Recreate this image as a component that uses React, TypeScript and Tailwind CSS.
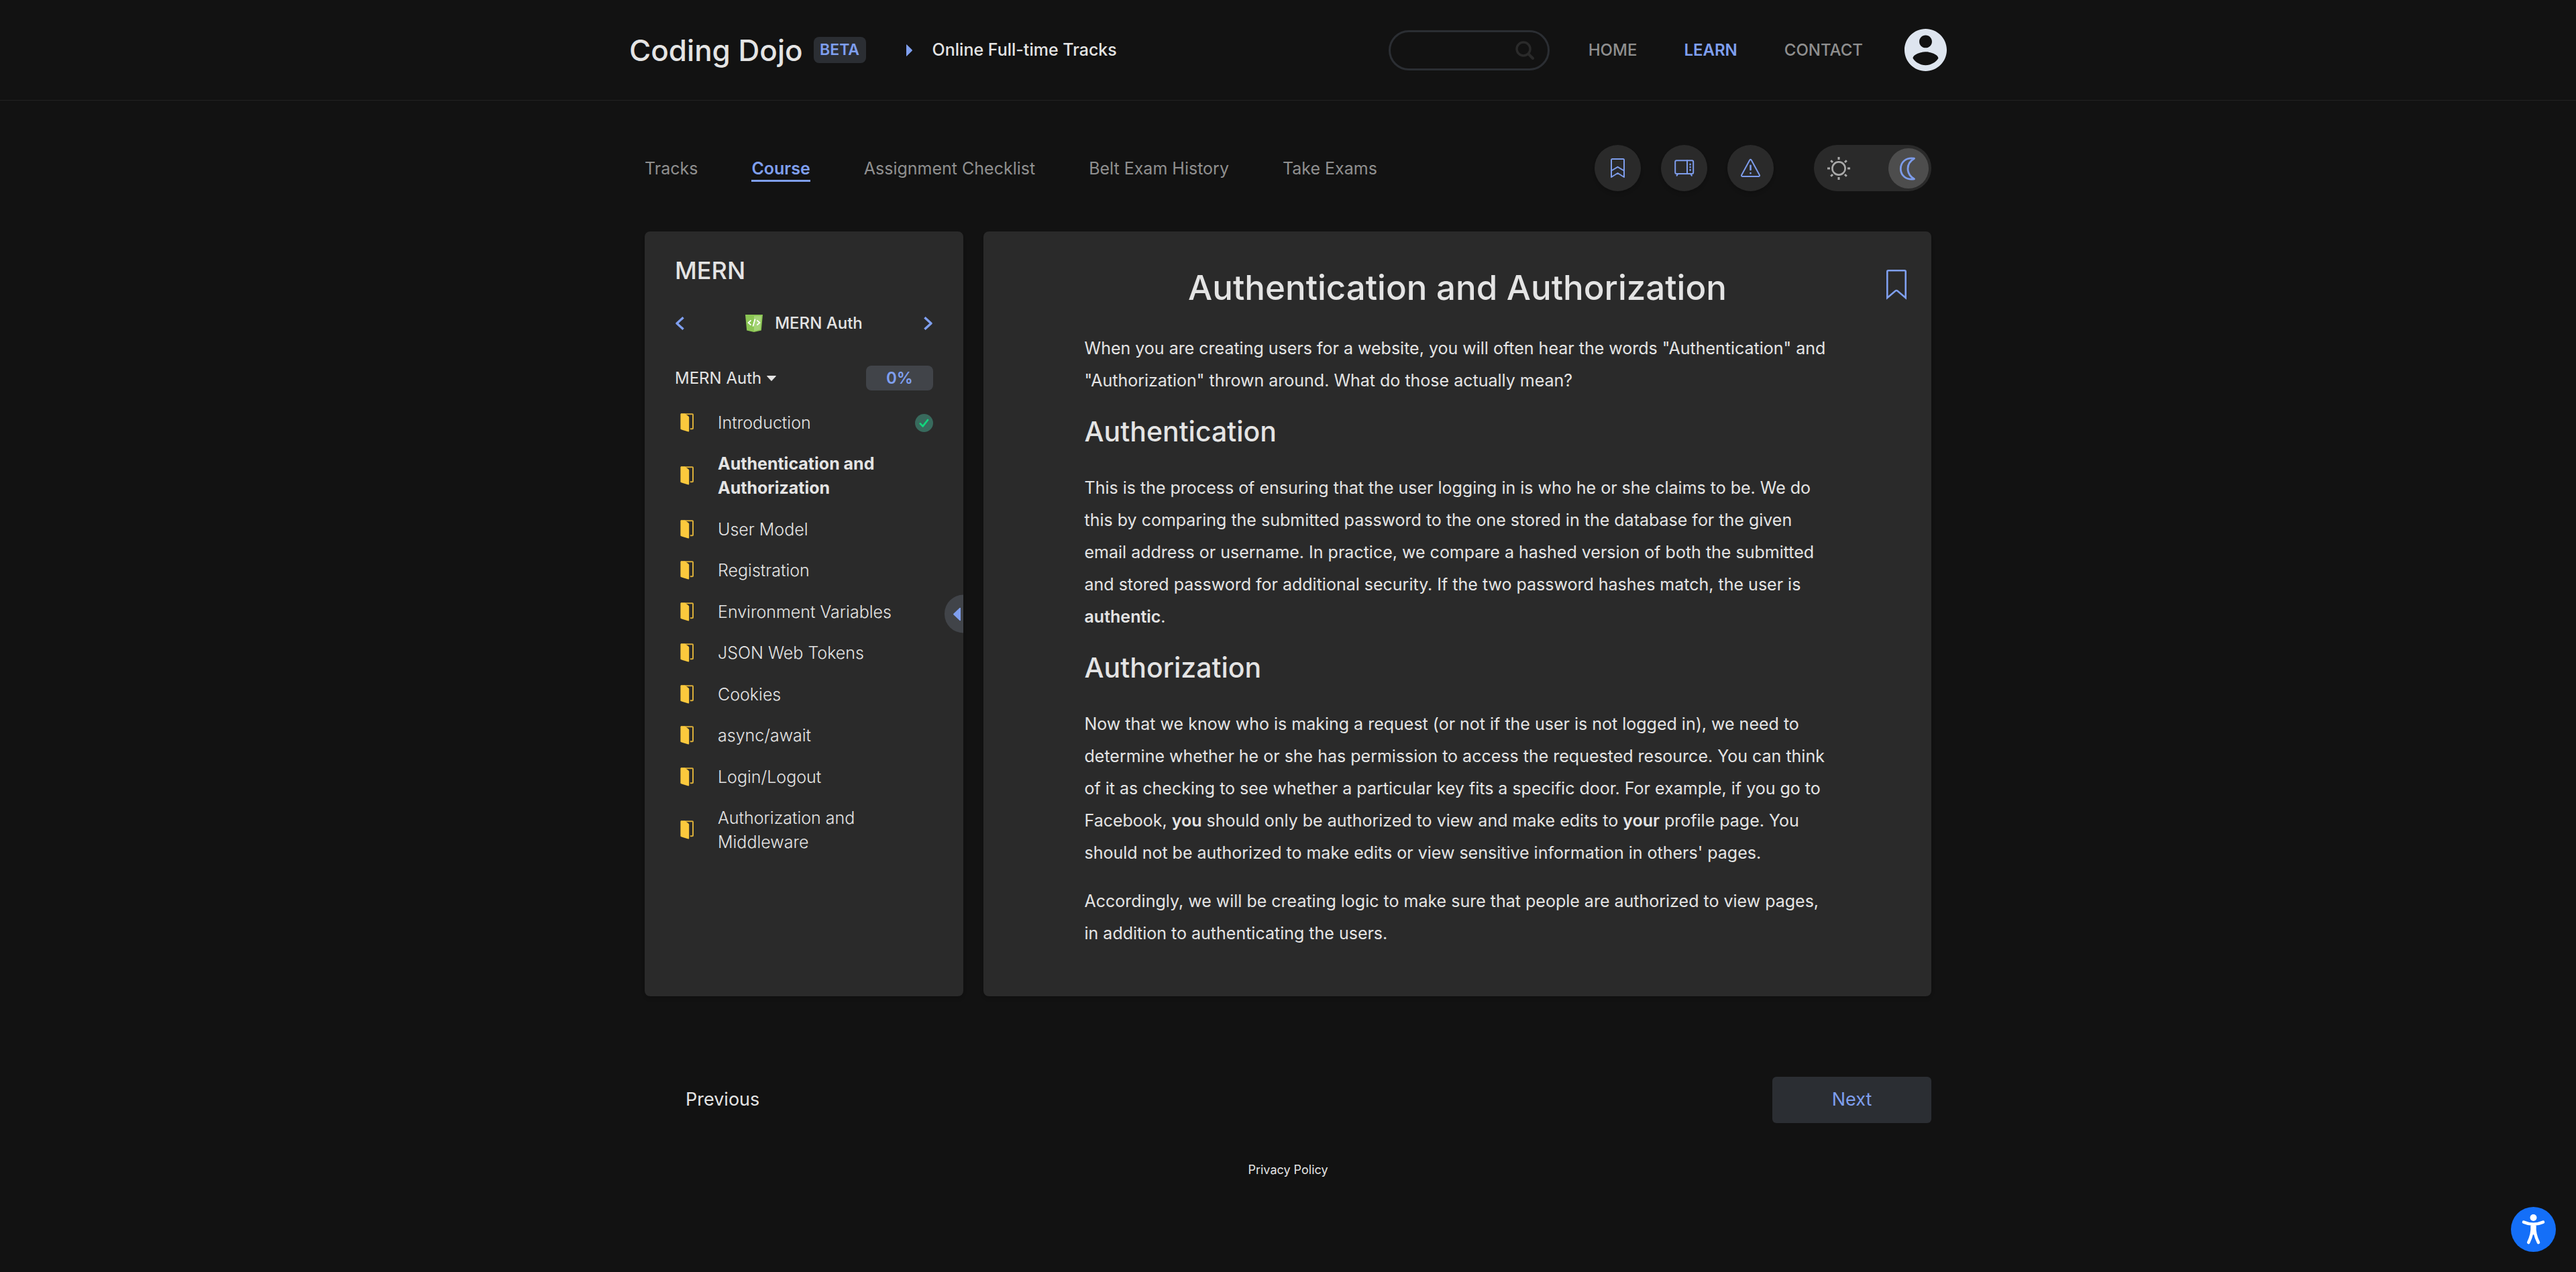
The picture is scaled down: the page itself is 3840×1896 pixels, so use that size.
import type { ReactNode } from "react";

const tabs = ["Tracks", "Course", "Assignment Checklist", "Belt Exam History", "Take Exams"];

const lessons = [
  { title: "Introduction", done: true },
  { title: "Authentication and Authorization", current: true },
  { title: "User Model" },
  { title: "Registration" },
  { title: "Environment Variables" },
  { title: "JSON Web Tokens" },
  { title: "Cookies" },
  { title: "async/await" },
  { title: "Login/Logout" },
  { title: "Authorization and Middleware" },
];

function LessonIcon() {
  return (
    <svg viewBox="0 0 20 28" className="ml-2 h-7 w-5 shrink-0" fill="none" aria-hidden="true">
      <path d="M1 1.2H18Q19 1.2 19 2.2V22.2Q19 23.2 18 23.2H14.8" stroke="#d9ad38" strokeWidth="2" />
      <path d="M0.4 1.6Q0.4 0.6 1.4 0.6H7L12.4 4.6Q13.2 5.3 13.2 6.3V26.4Q13.2 27.7 12 27.4L1.4 24.2Q0.4 23.8 0.4 22.9Z" fill="#fbc93d" />
    </svg>
  );
}

function DoneIcon() {
  return (
    <svg viewBox="0 0 27 27" className="size-[27px] shrink-0" fill="none" role="img" aria-label="Completed">
      <circle cx="13.5" cy="13.5" r="13.5" fill="#386a5d" />
      <path d="M7.8 14.4L11.6 18.4L19 9" stroke="#12d67d" strokeWidth="2.8" strokeLinecap="round" strokeLinejoin="round" />
    </svg>
  );
}

function ShieldIcon() {
  return (
    <svg viewBox="0 0 26 26" className="size-[26px]" fill="none" aria-hidden="true">
      <path d="M0 0H26L23.8 23.6L13 26L2.2 23.6Z" fill="#8bc554" />
      <path d="M13 2H24L22.2 22.2L13 24.2Z" fill="#a5d477" />
      <path d="M8.6 8.4L4.6 12L8.6 15.6M17.4 8.4L21.4 12L17.4 15.6M14.6 6.4L11.4 17.4" stroke="#ffffff" strokeWidth="1.8" />
    </svg>
  );
}

function RoundButton({ label, children }: { label: string; children: ReactNode }) {
  return (
    <button type="button" aria-label={label} className="size-[69px] rounded-full bg-[#2a2a2a] shadow-md">
      <svg
        viewBox="0 0 69 69"
        className="size-full"
        fill="none"
        stroke="#7d9ceb"
        strokeWidth="2"
        strokeLinecap="round"
        strokeLinejoin="round"
        aria-hidden="true"
      >
        {children}
      </svg>
    </button>
  );
}

function Header() {
  return (
    <header className="border-b border-[#222222]">
      <div className="mx-auto flex h-[149px] max-w-[1964px] items-center justify-between">
        <div className="flex items-center">
          <a href="#home" className="text-[44px] leading-none font-medium">Coding Dojo</a>
          <span className="ml-4 flex h-[39px] w-[78px] items-center justify-center rounded-lg bg-[#2b2e33] text-[23px] font-semibold text-[#7f9fef]">
            BETA
          </span>
          <svg viewBox="0 0 9 18" className="ml-[60px] h-[18px] w-[9px]" aria-hidden="true">
            <path d="M0 0.5Q0 -0.3 1 0.8L8.6 8.2Q9.2 9 8.6 9.8L1 17.2Q0 18.3 0 17.5Z" fill="#7f9fef" />
          </svg>
          <a href="#tracks" className="ml-[30px] text-[25px] font-medium">Online Full-time Tracks</a>
        </div>
        <div className="flex items-center">
          <label className="flex h-[60px] w-[240px] items-center rounded-full border-[3px] border-[#2b2e33] pr-5 pl-6">
            <input type="search" aria-label="Search" className="min-w-0 flex-1 bg-transparent text-2xl outline-none" />
            <svg viewBox="0 0 28 28" className="size-7 shrink-0" fill="none" stroke="#2a2a2a" aria-hidden="true">
              <circle cx="12" cy="12" r="10" strokeWidth="3.4" />
              <path d="M19.5 19.5L26 26" strokeWidth="4" strokeLinecap="round" />
            </svg>
          </label>
          <nav className="ml-[58px] flex gap-[70px] text-2xl font-medium text-[#8f8f8f]">
            <a href="#home">HOME</a>
            <a href="#learn" className="font-semibold text-[#7f9fef]">LEARN</a>
            <a href="#contact">CONTACT</a>
          </nav>
          <button type="button" aria-label="Account" className="ml-[62px]">
            <svg viewBox="2 2 20 20" className="size-[63px]" fill="#dee5ef" aria-hidden="true">
              <path d="M12 2C6.48 2 2 6.48 2 12s4.48 10 10 10 10-4.48 10-10S17.52 2 12 2zm0 3c1.66 0 3 1.34 3 3s-1.34 3-3 3-3-1.34-3-3 1.34-3 3-3zm0 14.2c-2.5 0-4.71-1.28-6-3.22.03-1.99 4-3.08 6-3.08 1.99 0 5.97 1.09 6 3.08-1.29 1.94-3.5 3.22-6 3.22z" />
            </svg>
          </button>
        </div>
      </div>
    </header>
  );
}

function Toolbar() {
  return (
    <div className="flex items-center justify-between">
      <nav className="flex gap-20 text-[25px] leading-[34px] text-[#8f8f8f]">
        {tabs.map((tab) => (
          <a
            key={tab}
            href="#course"
            className={
              tab === "Course"
                ? "border-y-[3px] border-t-transparent border-b-[#7f9fef] font-semibold text-[#7f9fef]"
                : "border-y-[3px] border-transparent"
            }
          >
            {tab}
          </a>
        ))}
      </nav>
      <div className="flex gap-[30px]">
        <RoundButton label="Bookmarks">
          <path d="M25 48V22.5Q25 21 26.5 21H42.5Q44 21 44 22.5V48L34.5 42Z" />
          <path d="M25 38.5L34.5 32.8L44 38.5" />
        </RoundButton>
        <RoundButton label="Videos">
          <rect x="21.2" y="23.3" width="27" height="19.6" rx="2" />
          <path d="M39 23.3V42.9M23.6 45.6L25 43.4M45.8 45.6L44.4 43.4" />
          <path d="M43.6 28.6V29.4M43.6 33V33.2M43.6 37V37.8" strokeWidth="2.4" />
        </RoundButton>
        <RoundButton label="Report an issue">
          <path d="M33.2 22.8Q34.5 20.8 35.8 22.8L47.8 44.8Q48.6 46.8 46.6 46.9H22.4Q20.4 46.8 21.2 44.8Z" />
          <path d="M34.5 30.8V37M34.5 42V42.2" strokeWidth="2.6" />
        </RoundButton>
        <button
          type="button"
          role="switch"
          aria-checked="true"
          aria-label="Dark mode"
          className="ml-[30px] flex h-[69px] w-[175px] items-center justify-between rounded-full bg-[#2a2a2a] pr-1 pl-5"
        >
          <svg viewBox="0 0 34 34" className="size-[34px]" fill="none" stroke="#a9a9a9" strokeWidth="2.6" aria-hidden="true">
            <circle cx="17" cy="17" r="9.6" />
            <path
              d="M17 0V4M17 30V34M0 17H4M30 17H34M5.2 5.2L8 8M26 26L28.8 28.8M5.2 28.8L8 26M26 8L28.8 5.2"
              strokeWidth="3"
            />
          </svg>
          <span className="size-[60px] rounded-full bg-[#4d4d4d]">
            <svg viewBox="0 0 60 60" className="size-full" fill="none" stroke="#7d9ceb" strokeWidth="2.8" strokeLinejoin="round" aria-hidden="true">
              <path d="M38.5 15.2C26 13 18.3 21 18.3 30.5S26 48 38.5 45.8C32 42 29 37 29 30.5S32 19 38.5 15.2Z" />
            </svg>
          </span>
        </button>
      </div>
    </div>
  );
}

function Sidebar() {
  return (
    <aside className="relative overflow-hidden rounded-lg bg-[#2a2a2a] px-[45px] pt-[38px] shadow-md">
      <h2 className="text-4xl leading-10 font-medium">MERN</h2>
      <div className="mt-[46px] flex h-[26px] items-center justify-between">
        <button type="button" aria-label="Previous chapter">
          <svg viewBox="0 0 14 20" className="h-5 w-3.5" fill="none" stroke="#7f9fef" strokeWidth="3.4" aria-hidden="true">
            <path d="M12.6 1.2L3 10L12.6 18.8" strokeLinejoin="round" />
          </svg>
        </button>
        <div className="flex items-center gap-[18px]">
          <ShieldIcon />
          <span className="text-2xl leading-6 font-medium">MERN Auth</span>
        </div>
        <button type="button" aria-label="Next chapter">
          <svg viewBox="0 0 14 20" className="h-5 w-3.5" fill="none" stroke="#7f9fef" strokeWidth="3.4" aria-hidden="true">
            <path d="M1.4 1.2L11 10L1.4 18.8" strokeLinejoin="round" />
          </svg>
        </button>
      </div>
      <div className="mt-[50px] flex items-center justify-between">
        <button type="button" aria-expanded="true" className="flex items-center gap-2 text-2xl">
          MERN Auth
          <svg viewBox="0 0 14 8" className="h-2 w-3.5" fill="#e4e4e4" aria-hidden="true">
            <path d="M0.6 0H13.4Q14.2 0.4 13.6 1L7.6 7.6Q7 8.2 6.4 7.6L0.4 1Q-0.2 0.4 0.6 0Z" />
          </svg>
        </button>
        <span className="flex h-[37px] w-[100px] items-center justify-center rounded-lg bg-[#414449] text-2xl font-semibold text-[#7f9fef]">
          0%
        </span>
      </div>
      <ul className="mt-[30px] flex min-h-[661px] flex-col justify-between text-[25px] leading-9">
        {lessons.map((lesson) => (
          <li key={lesson.title} className="flex items-center">
            <LessonIcon />
            <a href="#lesson" className={lesson.current ? "ml-9 flex-1 font-bold" : "ml-9 flex-1 font-[350]"}>
              {lesson.title}
            </a>
            {lesson.done && <DoneIcon />}
          </li>
        ))}
      </ul>
      <button
        type="button"
        aria-label="Collapse sidebar"
        className="absolute top-1/2 right-0 flex h-[57px] w-7 -translate-y-1/2 items-center justify-end rounded-l-full bg-[#414449] pr-1"
      >
        <svg viewBox="0 0 11 20" className="h-5 w-[11px]" fill="#7f9fef" aria-hidden="true">
          <path d="M11 0.8V19.2Q10.6 20.2 9.6 19.4L0.4 10.8Q-0.2 10 0.4 9.2L9.6 0.6Q10.6 -0.2 11 0.8Z" />
        </svg>
      </button>
    </aside>
  );
}

function Article() {
  return (
    <article className="relative rounded-lg bg-[#2a2a2a] px-16 pt-[54px] pb-[70px] shadow-md">
      <button type="button" aria-label="Bookmark this page" className="absolute top-[57px] right-[37px]">
        <svg viewBox="0 0 30 45" className="h-[45px] w-[30px]" fill="none" stroke="#7f9fef" strokeWidth="2.6" aria-hidden="true">
          <path d="M1.3 42V2.8Q1.3 1.3 2.8 1.3H27.2Q28.7 1.3 28.7 2.8V42L16.4 31.6Q15 30.4 13.6 31.6Z" />
        </svg>
      </button>
      <h1 className="text-center text-[51px] leading-[60px] font-medium">Authentication and Authorization</h1>
      <div className="mx-auto max-w-[1112px] text-[25px] leading-[48px]">
        <p className="mt-9">
          When you are creating users for a website, you will often hear the words "Authentication" and "Authorization"
          thrown around. What do those actually mean?
        </p>
        <h2 className="mt-6 mb-8 text-[41px] leading-[56px] font-medium">Authentication</h2>
        <p>
          This is the process of ensuring that the user logging in is who he or she claims to be. We do this by comparing
          the submitted password to the one stored in the database for the given email address or username. In practice,
          we compare a hashed version of both the submitted and stored password for additional security. If the two
          password hashes match, the user is <strong className="font-semibold">authentic</strong>.
        </p>
        <h2 className="mt-6 mb-8 text-[41px] leading-[56px] font-medium">Authorization</h2>
        <p>
          Now that we know who is making a request (or not if the user is not logged in), we need to determine whether he
          or she has permission to access the requested resource. You can think of it as checking to see whether a
          particular key fits a specific door. For example, if you go to Facebook,{" "}
          <strong className="font-semibold">you</strong> should only be authorized to view and make edits to{" "}
          <strong className="font-semibold">your</strong> profile page. You should not be authorized to make edits or view
          sensitive information in others' pages.
        </p>
        <p className="mt-6">
          Accordingly, we will be creating logic to make sure that people are authorized to view pages, in addition to
          authenticating the users.
        </p>
      </div>
    </article>
  );
}

export default function App() {
  return (
    <div className="min-h-screen bg-[#121212] font-[Inter,sans-serif] text-[#e4e4e4]">
      <Header />
      <main className="mx-auto max-w-[1918px] pt-[66px]">
        <Toolbar />
        <div className="mt-[60px] grid grid-cols-[475px_1fr] gap-[30px]">
          <Sidebar />
          <Article />
        </div>
        <div className="mt-[120px] flex items-center justify-between text-[27px]">
          <button type="button" className="h-[69px] px-[61px]">Previous</button>
          <button type="button" className="h-[69px] w-[237px] rounded-md bg-[#2b2e33] text-[#7f9fef]">Next</button>
        </div>
      </main>
      <footer className="pt-14 pb-10 text-center text-lg">
        <a href="#privacy">Privacy Policy</a>
      </footer>
      <button type="button" aria-label="Accessibility options" className="fixed right-[30px] bottom-[30px]">
        <svg viewBox="0 0 67 67" className="size-[67px]" fill="none" aria-hidden="true">
          <circle cx="33.5" cy="33.5" r="33.5" fill="#146ff8" />
          <circle cx="33.5" cy="16" r="5" fill="#ffffff" />
          <path
            d="M19 22.6Q33.5 29 48 22.6M33.5 27V39M31.6 28Q32.6 40 26.2 53M35.4 28Q34.4 40 41 53"
            stroke="#ffffff"
            strokeWidth="4.6"
            strokeLinecap="round"
            strokeLinejoin="round"
          />
        </svg>
      </button>
    </div>
  );
}
